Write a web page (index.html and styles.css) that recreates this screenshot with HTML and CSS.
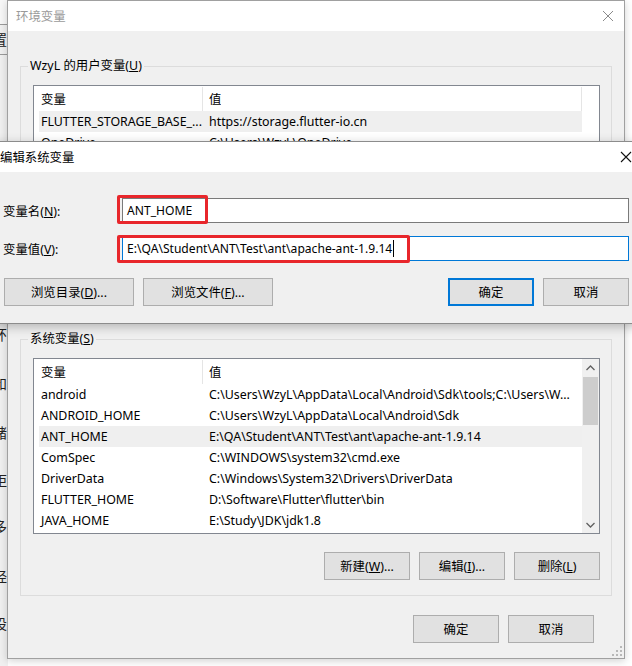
FILE: index.html
```html
<!DOCTYPE html>
<html lang="zh-CN">
<head>
<meta charset="utf-8">
<title>环境变量</title>
<link rel="stylesheet" href="styles.css">
</head>
<body>
<div class="desktop">
  <div class="bgwin">
    <div class="bg-top"></div>
    <div class="bg-line"></div>
    <div class="bg-ch c1">置</div>
    <div class="bg-line l2"></div>
    <div class="bg-ch c2">环</div>
    <div class="bg-ch c3">和</div>
    <div class="bg-ch c4">赌</div>
    <div class="bg-ch c5">距</div>
    <div class="bg-ch c6">多</div>
    <div class="bg-ch c7">经</div>
    <div class="bg-ch c8">设</div>
  </div>

  <div class="win main">
    <div class="titlebar">
      <span class="title inactive">环境变量</span>
      <span class="close gray"><svg width="12" height="12" viewBox="0 0 12 12"><path d="M1 1 L11 11 M11 1 L1 11" stroke="#8a8a8a" stroke-width="1" fill="none"/></svg></span>
    </div>
    <div class="body">
      <div class="group user">
        <span class="legend">WzyL 的用户变量(<u>U</u>)</span>
        <div class="list user-list">
          <div class="list-main">
            <div class="hdr"><span class="c-name">变量</span><span class="sep"></span><span class="c-val">值</span><span class="sep end"></span></div>
            <div class="row sel"><span class="c-name">FLUTTER_STORAGE_BASE_...</span><span class="c-val">https://storage.flutter-io.cn</span></div>
            <div class="row"><span class="c-name">OneDrive</span><span class="c-val">C:\Users\WzyL\OneDrive</span></div>
          </div>
          <div class="list-pad"></div>
        </div>
      </div>

      <div class="group sys">
        <span class="legend">系统变量(<u>S</u>)</span>
        <div class="list">
          <div class="list-main">
            <div class="hdr"><span class="c-name">变量</span><span class="sep"></span><span class="c-val">值</span></div>
            <div class="row"><span class="c-name">android</span><span class="c-val">C:\Users\WzyL\AppData\Local\Android\Sdk\tools;C:\Users\W...</span></div>
            <div class="row"><span class="c-name">ANDROID_HOME</span><span class="c-val">C:\Users\WzyL\AppData\Local\Android\Sdk</span></div>
            <div class="row sel"><span class="c-name">ANT_HOME</span><span class="c-val">E:\QA\Student\ANT\Test\ant\apache-ant-1.9.14</span></div>
            <div class="row"><span class="c-name">ComSpec</span><span class="c-val">C:\WINDOWS\system32\cmd.exe</span></div>
            <div class="row"><span class="c-name">DriverData</span><span class="c-val">C:\Windows\System32\Drivers\DriverData</span></div>
            <div class="row"><span class="c-name">FLUTTER_HOME</span><span class="c-val">D:\Software\Flutter\flutter\bin</span></div>
            <div class="row"><span class="c-name">JAVA_HOME</span><span class="c-val">E:\Study\JDK\jdk1.8</span></div>
          </div>
          <div class="vscroll">
            <div class="sb-btn"><svg width="9" height="6" viewBox="0 0 9 6"><path d="M0.5 5 L4.5 1 L8.5 5" stroke="#606060" stroke-width="1.3" fill="none"/></svg></div>
            <div class="sb-thumb"></div>
            <div class="sb-fill"></div>
            <div class="sb-btn"><svg width="9" height="6" viewBox="0 0 9 6"><path d="M0.5 1 L4.5 5 L8.5 1" stroke="#606060" stroke-width="1.3" fill="none"/></svg></div>
          </div>
        </div>
        <div class="btn-row">
          <button class="btn">新建(<u>W</u>)...</button>
          <button class="btn">编辑(<u>I</u>)...</button>
          <button class="btn">删除(<u>L</u>)</button>
        </div>
      </div>

      <div class="btn-row bottom">
        <button class="btn">确定</button>
        <button class="btn">取消</button>
      </div>
      <svg class="grip" width="10" height="10" viewBox="0 0 10 10"><g fill="#b8b8b8"><rect x="8" y="0" width="2" height="2"/><rect x="4" y="4" width="2" height="2"/><rect x="8" y="4" width="2" height="2"/><rect x="0" y="8" width="2" height="2"/><rect x="4" y="8" width="2" height="2"/><rect x="8" y="8" width="2" height="2"/></g></svg>
    </div>
  </div>

  <div class="win dialog">
    <div class="titlebar">
      <span class="title">编辑系统变量</span>
      <span class="close"><svg width="12" height="12" viewBox="0 0 12 12"><path d="M1 1 L11 11 M11 1 L1 11" stroke="#111" stroke-width="1.1" fill="none"/></svg></span>
    </div>
    <div class="dbody">
      <div class="field">
        <label class="flabel">变量名(<u>N</u>):</label>
        <div class="input">ANT_HOME</div>
        <span class="mark m1"></span>
      </div>
      <div class="field">
        <label class="flabel">变量值(<u>V</u>):</label>
        <div class="input focus">E:\QA\Student\ANT\Test\ant\apache-ant-1.9.14<span class="caret"></span></div>
        <span class="mark m2"></span>
      </div>
      <div class="dbtns">
        <button class="btn wide">浏览目录(<u>D</u>)...</button>
        <button class="btn wide">浏览文件(<u>F</u>)...</button>
        <span class="spacer"></span>
        <button class="btn default">确定</button>
        <button class="btn">取消</button>
      </div>
    </div>
  </div>
</div>
</body>
</html>
```

FILE: styles.css
```css
* { box-sizing: border-box; }
html, body { margin: 0; padding: 0; }
body {
  width: 632px;
  height: 666px;
  overflow: hidden;
  background: #ffffff;
  font-family: "Noto Sans", "Noto Sans CJK SC", sans-serif;
  font-size: 12.4px;
  color: #000;
}
u { text-decoration: underline; text-underline-offset: 1px; }
.desktop { position: relative; width: 632px; height: 666px; overflow: hidden; }

/* background window strip */
.bgwin {
  position: absolute; left: 0; top: 0; width: 8px; height: 666px;
  background: #f0f0f0; overflow: hidden;
}
.bg-top { height: 24px; background: #f7f7f7; }
.bg-line { height: 1px; background: #9a9a9a; }
.bg-line.l2 { position: absolute; top: 54px; left: 0; width: 8px; }
.bg-ch { position: absolute; left: -7px; font-size: 14px; color: #222; line-height: 16px; }
.c1 { top: 32px; } .c2 { top: 327px; } .c3 { top: 376px; } .c4 { top: 425px; }
.c5 { top: 473px; } .c6 { top: 519px; } .c7 { top: 569px; } .c8 { top: 616px; }

/* windows */
.win { position: absolute; display: flex; flex-direction: column; }
.main {
  left: 7px; top: 0; width: 618px; height: 659px;
  border: 1px solid #a0a0a0;
  background: #f0f0f0;
  box-shadow: 0 2px 8px rgba(0,0,0,0.18);
}
.titlebar {
  height: 30px; flex: none; background: #fff;
  display: flex; align-items: center; justify-content: space-between;
}
.main .titlebar { padding-left: 8px; }
.title { font-size: 12.4px; }
.title.inactive { color: #9a9a9a; }
.close { width: 46px; height: 30px; display: flex; align-items: center; justify-content: center; }
.main .close { width: 32px; }

.body {
  position: relative; flex: 1;
  padding: 35px 12px 0 12px;
  display: flex; flex-direction: column;
}
.group {
  position: relative;
  border: 1px solid #dcdcdc;
  padding: 18px 11px 0 12px;
}
.group.user { height: 258px; }
.group.sys { height: 257px; margin-top: 15px; }
.legend {
  position: absolute; left: 7px; top: -10px;
  background: #f0f0f0; padding: 0 2px; line-height: 18px;
}

.list {
  height: 176px; border: 1px solid #828790; background: #fff;
  display: flex;
}
.list-main { flex: 1; padding-left: 5px; min-width: 0; }
.list-pad { width: 17px; flex: none; background: #fff; }
.hdr { height: 25px; display: flex; align-items: center; position: relative; }
.row { height: 21px; display: flex; align-items: center; }
.row.sel { background: #efefef; }
.c-name { width: 168px; padding-left: 2px; white-space: nowrap; overflow: hidden; flex: none; }
.c-val { padding-left: 2px; white-space: nowrap; overflow: hidden; }
.sep { position: absolute; left: 163px; top: 1px; bottom: 0; width: 1px; background: #e5e5e5; }
.sep.end { left: auto; right: 0; }

.vscroll { width: 17px; flex: none; background: #f0f0f0; display: flex; flex-direction: column; }
.sb-btn { height: 17px; display: flex; align-items: center; justify-content: center; }
.sb-thumb { height: 48px; margin: 1px 1px 0 1px; background: #cdcdcd; }
.sb-fill { flex: 1; }

.btn-row { display: flex; justify-content: flex-end; gap: 9px; margin-top: 18px; }
.btn-row.bottom { margin-top: 19px; margin-right: 18px; }
.btn {
  width: 86px; height: 28px;
  background: #e1e1e1; border: 1px solid #adadad;
  font-family: inherit; font-size: 12.4px; color: #000;
  padding: 0; margin: 0;
}
.grip { position: absolute; right: 2px; bottom: 2px; }

/* edit dialog */
.dialog {
  left: -20px; top: 141px; width: 670px; height: 183px;
  border: 1px solid #8c8c8c;
  background: #f0f0f0;
  box-shadow: 0 3px 10px rgba(0,0,0,0.25);
}
.dialog .titlebar { padding-left: 19px; }
.dbody { flex: 1; padding: 26px 20px 0 22px; display: flex; flex-direction: column; }
.field { position: relative; display: flex; align-items: center; height: 25px; margin-bottom: 13px; }
.flabel { width: 119px; flex: none; }
.input {
  flex: 1; height: 25px; background: #fff;
  border: 1px solid #7a7a7a;
  display: flex; align-items: center; padding-left: 4px;
  white-space: nowrap; font-size: 12.1px;
}
.input.focus { border-color: #0078d7; }
.caret { display: inline-block; width: 1px; height: 17px; background: #000; margin-left: 1px; }
.mark { position: absolute; border: 3px solid #e8262b; border-radius: 2px; }
.m1 { left: 114px; top: -3px; width: 91px; height: 29px; }
.m2 { left: 114px; top: -1px; width: 293px; height: 28px; }
.dbtns { display: flex; align-items: center; margin-top: 4px; margin-left: 1px; }
.btn.wide { width: 130px; margin-right: 9px; }
.spacer { flex: 1; }
.btn.default { border: 2px solid #0078d7; margin-right: 9px; }
```
